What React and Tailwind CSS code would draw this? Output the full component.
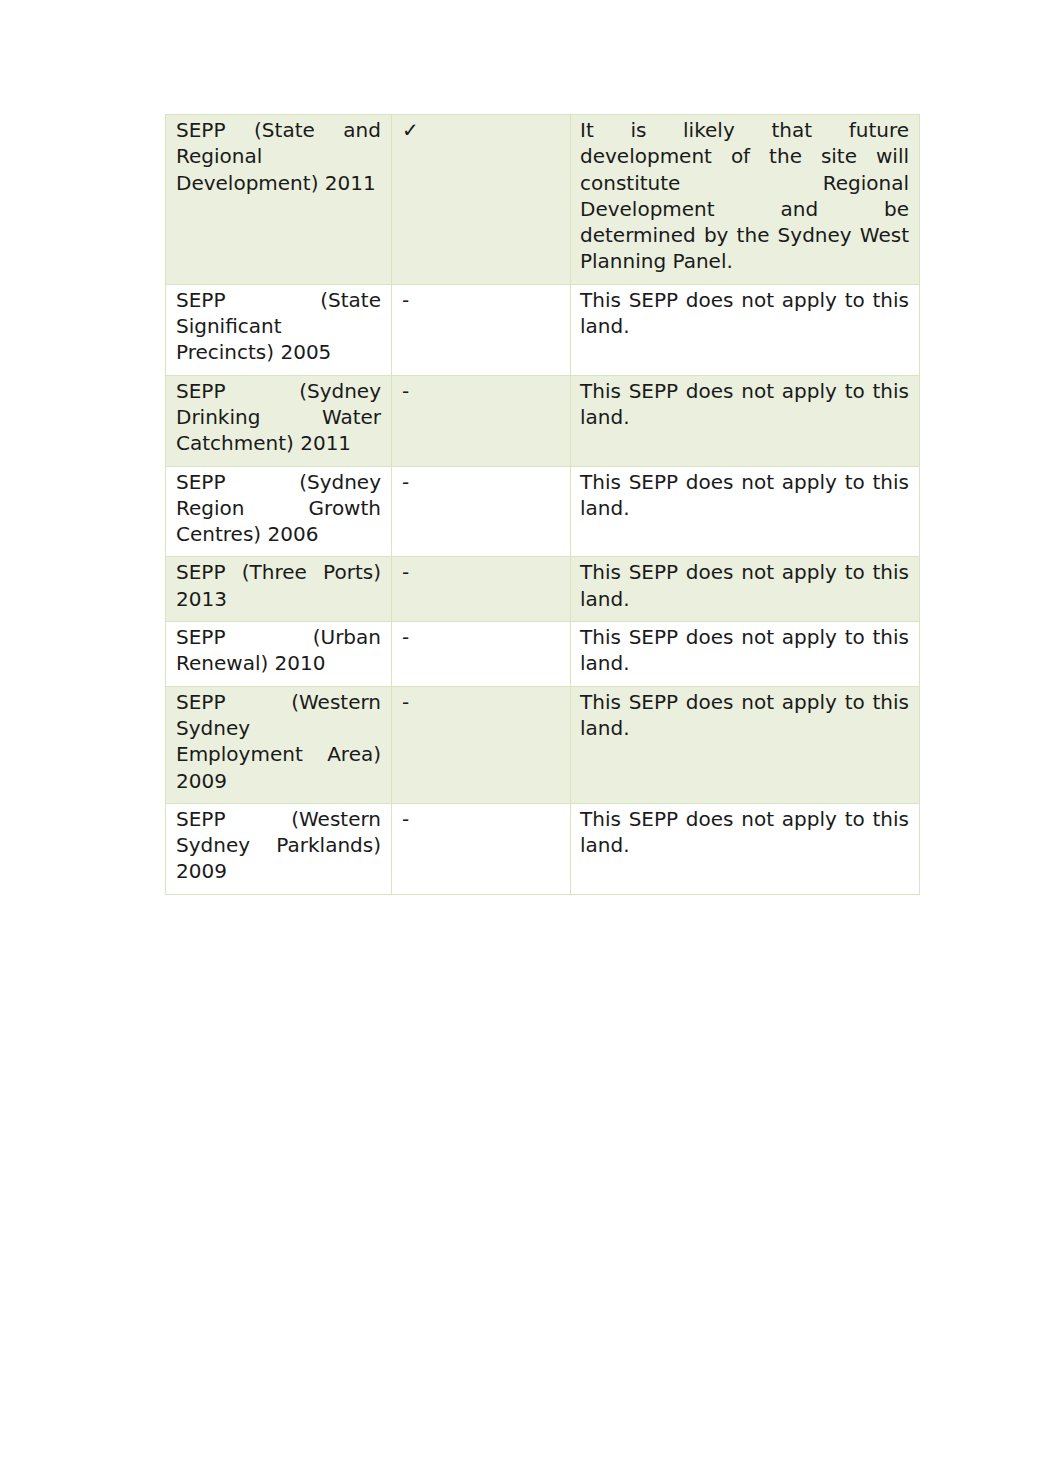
import React from "react";

const notApply = ["This SEPP does not apply to this", "land."];

const rows = [
  {
    name: ["SEPP (State and", "Regional", "Development) 2011"],
    applies: "✓",
    comment: [
      "It is likely that future",
      "development of the site will",
      "constitute Regional",
      "Development and be",
      "determined by the Sydney West",
      "Planning Panel.",
    ],
  },
  { name: ["SEPP (State", "Significant", "Precincts) 2005"], applies: "-", comment: notApply },
  { name: ["SEPP (Sydney", "Drinking Water", "Catchment) 2011"], applies: "-", comment: notApply },
  { name: ["SEPP (Sydney", "Region Growth", "Centres) 2006"], applies: "-", comment: notApply },
  { name: ["SEPP (Three Ports)", "2013"], applies: "-", comment: notApply },
  { name: ["SEPP (Urban", "Renewal) 2010"], applies: "-", comment: notApply },
  { name: ["SEPP (Western", "Sydney", "Employment Area)", "2009"], applies: "-", comment: notApply },
  { name: ["SEPP (Western", "Sydney Parklands)", "2009"], applies: "-", comment: notApply },
];

// Word-style justified paragraph: every line but the last is spread to the cell edge,
// except single-word lines which stay left.
function Justified({ lines }) {
  return (
    <>
      {lines.map((line, i) => {
        const spread = i < lines.length - 1 && line.includes(" ");
        return (
          <div
            key={i}
            className={
              spread
                ? "whitespace-nowrap text-justify [text-align-last:justify]"
                : "whitespace-nowrap text-left"
            }
          >
            {line}
          </div>
        );
      })}
    </>
  );
}

function App() {
  return (
    <div className="min-h-[1484px] w-[1041px] bg-white pt-[114px] pl-[165px] font-['DejaVu_Sans',sans-serif] text-[20px] leading-[26.3px] text-[#1a1a1a]">
      <table className="w-[754px] table-fixed border-collapse">
        <colgroup>
          <col className="w-[226px]" />
          <col className="w-[179px]" />
          <col className="w-[349px]" />
        </colgroup>
        <tbody>
          {rows.map((row, i) => (
            <tr key={i} className={i % 2 === 0 ? "bg-[#ebf0de]" : "bg-white"}>
              <td className="border border-[#d7e4bd] px-[10px] pt-[2px] pb-[9px] align-top">
                <Justified lines={row.name} />
              </td>
              <td className="border border-[#d7e4bd] px-[10px] pt-[2px] pb-[9px] align-top">
                {row.applies}
              </td>
              <td className="border border-[#d7e4bd] pl-[9px] pr-[10px] pt-[2px] pb-[9px] align-top">
                <Justified lines={row.comment} />
              </td>
            </tr>
          ))}
        </tbody>
      </table>
    </div>
  );
}

export default App;
